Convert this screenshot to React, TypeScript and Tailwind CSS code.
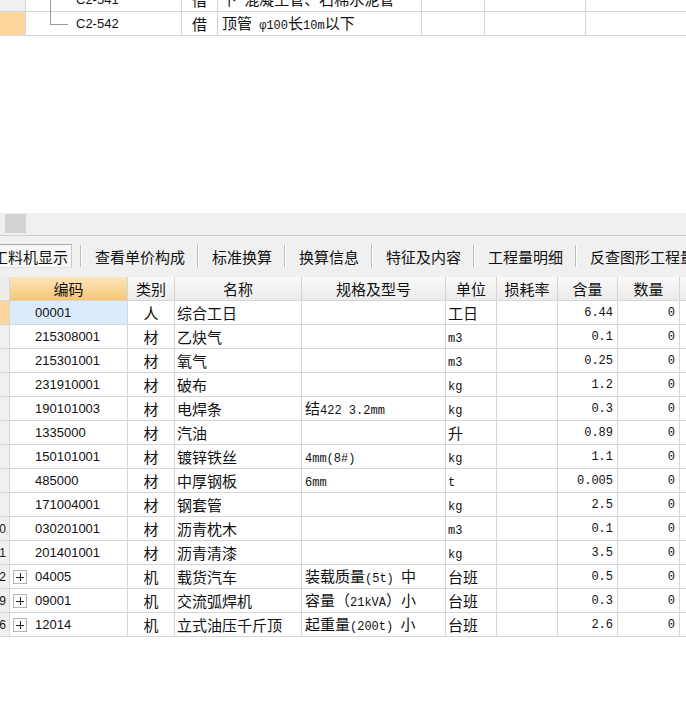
import React from "react";

const cjk = "font-['Noto_Sans_CJK_SC',sans-serif]";

type Row = {
  n?: string;
  code: string;
  cat: string;
  name: string;
  spec?: string;
  unit: string;
  amount: string;
  plus?: boolean;
  selected?: boolean;
};

const rows: Row[] = [
  { code: "00001", cat: "人", name: "综合工日", unit: "工日", amount: "6.44", selected: true },
  { code: "215308001", cat: "材", name: "乙炔气", unit: "m3", amount: "0.1" },
  { code: "215301001", cat: "材", name: "氧气", unit: "m3", amount: "0.25" },
  { code: "231910001", cat: "材", name: "破布", unit: "kg", amount: "1.2" },
  { code: "190101003", cat: "材", name: "电焊条", spec: "结422 3.2mm", unit: "kg", amount: "0.3" },
  { code: "1335000", cat: "材", name: "汽油", unit: "升", amount: "0.89" },
  { code: "150101001", cat: "材", name: "镀锌铁丝", spec: "4mm(8#)", unit: "kg", amount: "1.1" },
  { code: "485000", cat: "材", name: "中厚钢板", spec: "6mm", unit: "t", amount: "0.005" },
  { code: "171004001", cat: "材", name: "钢套管", unit: "kg", amount: "2.5" },
  { n: "10", code: "030201001", cat: "材", name: "沥青枕木", unit: "m3", amount: "0.1" },
  { n: "11", code: "201401001", cat: "材", name: "沥青清漆", unit: "kg", amount: "3.5" },
  { n: "12", code: "04005", cat: "机", name: "载货汽车", spec: "装载质量(5t) 中", unit: "台班", amount: "0.5", plus: true },
  { n: "39", code: "09001", cat: "机", name: "交流弧焊机", spec: "容量（21kVA）小", unit: "台班", amount: "0.3", plus: true },
  { n: "36", code: "12014", cat: "机", name: "立式油压千斤顶", spec: "起重量(200t) 小", unit: "台班", amount: "2.6", plus: true },
];

const tabs = ["查看单价构成", "标准换算", "换算信息", "特征及内容", "工程量明细", "反查图形工程量"];

// ascii runs are drawn in the narrow mono face, the rest in the CJK face
function Mixed({ text }: { text: string }) {
  const parts = text.split(/([\x20-\x7E\u03c6]+)/).filter(Boolean);
  return (
    <span className="whitespace-pre">
      {parts.map((p, i) =>
        /^[\x20-\x7E\u03c6]+$/.test(p) ? (
          <span key={i} className="font-['Liberation_Mono',monospace] text-[12px]">
            {p}
          </span>
        ) : (
          <span key={i}>{p}</span>
        )
      )}
    </span>
  );
}

function TreeLines({ last }: { last?: boolean }) {
  return (
    <svg width="50" height="24" className="shrink-0">
      <line x1="24.5" y1="0" x2="24.5" y2={last ? 12 : 24} stroke="#9a9a9a" />
      {last && <line x1="24" y1="12.5" x2="42" y2="12.5" stroke="#9a9a9a" />}
    </svg>
  );
}

function PlusBox() {
  return (
    <div className="w-[14px] h-[14px] ml-[3px] mr-[8px] border border-[#b4b4b4] bg-white flex items-center justify-center shrink-0">
      <svg width="10" height="10">
        <line x1="1" y1="5.5" x2="9" y2="5.5" stroke="#222" />
        <line x1="5.5" y1="1" x2="5.5" y2="9" stroke="#222" />
      </svg>
    </div>
  );
}

function TopRow({ code, name, last }: { code: string; name: string; last?: boolean }) {
  return (
    <div className="flex h-[24px] border-b border-[#d6d6d6]">
      <div className={`w-[26px] shrink-0 border-r border-[#d6d6d6] ${last ? "bg-[#fcd69c]" : "bg-[#f0f0f0]"}`} />
      <div className="w-[156px] shrink-0 border-r border-[#d6d6d6] flex items-center">
        <TreeLines last={last} />
        <span className="font-['Liberation_Sans',sans-serif] text-[13px] text-[#111]">{code}</span>
      </div>
      <div className="w-[36px] shrink-0 border-r border-[#d6d6d6] flex items-center justify-center">借</div>
      <div className="w-[204px] shrink-0 border-r border-[#d6d6d6] flex items-center pl-[4px] whitespace-nowrap overflow-hidden">
        <Mixed text={name} />
      </div>
      <div className="w-[63px] shrink-0 border-r border-[#d6d6d6]" />
      <div className="w-[101px] shrink-0 border-r border-[#d6d6d6]" />
      <div className="flex-1" />
    </div>
  );
}

export default function App() {
  return (
    <div className={`w-[686px] h-[704px] overflow-hidden bg-white text-[15px] text-[#111] leading-none ${cjk}`}>
      {/* upper grid, cut off at the top */}
      <div className="h-[36px] overflow-hidden">
        <div className="-mt-[12px]">
          <TopRow code="C2-541" name="下 混凝土管、石棉水泥管" />
          <TopRow code="C2-542" name="顶管 φ100长10m以下" last />
        </div>
      </div>

      <div className="h-[177px]" />

      {/* scroll strip */}
      <div className="h-[23px] bg-[#f0f0f0] border-b border-[#cfcfcf] pt-[1px]">
        <div className="ml-[5px] w-[21px] h-[19px] bg-[#d2d2d2]" />
      </div>

      {/* tabs */}
      <div className="h-[41px] bg-[#f0f0f0] flex items-start pt-[8px] whitespace-nowrap overflow-hidden">
        <div className="-ml-[10px] shrink-0 h-[24px] w-[82px] border border-[#a8a8a8] border-b-[#e4e4e4] border-r-[#c8c8c8] bg-[#f7f7f7] flex items-center pl-[2px]">
          工料机显示
        </div>
        <div className="w-[8px] shrink-0" />
        {tabs.map((t) => (
          <React.Fragment key={t}>
            <div className="mt-[1px] shrink-0 h-[22px] w-[2px] border-l border-[#bcbcbc] border-r border-r-white" />
            <div className="h-[24px] shrink-0 pl-[13px] pr-[12px] flex items-center">{t}</div>
          </React.Fragment>
        ))}
      </div>

      {/* header */}
      <div className="flex h-[24px] border-b border-[#d6d6d6]">
        <div className="w-[10px] shrink-0 border-r border-[#d6d6d6] bg-[#ececec]" />
        <div className="w-[118px] shrink-0 border-r border-[#d6d6d6] bg-linear-to-b from-[#fde5ba] to-[#f6c774] flex items-center justify-center">编码</div>
        <div className="w-[47px] shrink-0 border-r border-[#d6d6d6] bg-linear-to-b from-[#fafafa] to-[#ebebeb] flex items-center justify-center">类别</div>
        <div className="w-[127px] shrink-0 border-r border-[#d6d6d6] bg-linear-to-b from-[#fafafa] to-[#ebebeb] flex items-center justify-center">名称</div>
        <div className="w-[144px] shrink-0 border-r border-[#d6d6d6] bg-linear-to-b from-[#fafafa] to-[#ebebeb] flex items-center justify-center">规格及型号</div>
        <div className="w-[51px] shrink-0 border-r border-[#d6d6d6] bg-linear-to-b from-[#fafafa] to-[#ebebeb] flex items-center justify-center">单位</div>
        <div className="w-[61px] shrink-0 border-r border-[#d6d6d6] bg-linear-to-b from-[#fafafa] to-[#ebebeb] flex items-center justify-center">损耗率</div>
        <div className="w-[60px] shrink-0 border-r border-[#d6d6d6] bg-linear-to-b from-[#fafafa] to-[#ebebeb] flex items-center justify-center">含量</div>
        <div className="w-[62px] shrink-0 border-r border-[#d6d6d6] bg-linear-to-b from-[#fafafa] to-[#ebebeb] flex items-center justify-center">数量</div>
        <div className="flex-1 bg-linear-to-b from-[#fafafa] to-[#ebebeb]" />
      </div>

      {rows.map((r) => (
        <div key={r.code} className="flex h-[24px] border-b border-[#d6d6d6]">
          <div
            className={`w-[10px] shrink-0 border-r border-[#d6d6d6] overflow-hidden flex items-center justify-end pr-[3px] font-['Liberation_Sans',sans-serif] text-[12px] ${
              r.selected ? "bg-[#fcd69c]" : "bg-[#f0f0f0]"
            }`}
          >
            <span className="shrink-0">{r.n}</span>
          </div>
          <div
            className={`w-[118px] shrink-0 border-r border-[#d6d6d6] flex items-center font-['Liberation_Sans',sans-serif] text-[13px] ${
              r.selected ? "bg-[#dcebfb]" : ""
            } ${r.plus ? "" : "pl-[25px]"}`}
          >
            {r.plus && <PlusBox />}
            {r.code}
          </div>
          <div className="w-[47px] shrink-0 border-r border-[#d6d6d6] flex items-center justify-center">{r.cat}</div>
          <div className="w-[127px] shrink-0 border-r border-[#d6d6d6] flex items-center pl-[2px] whitespace-nowrap">{r.name}</div>
          <div className="w-[144px] shrink-0 border-r border-[#d6d6d6] flex items-center pl-[3px] whitespace-nowrap overflow-hidden">
            {r.spec && <Mixed text={r.spec} />}
          </div>
          <div className="w-[51px] shrink-0 border-r border-[#d6d6d6] flex items-center pl-[2px]">
            <Mixed text={r.unit} />
          </div>
          <div className="w-[61px] shrink-0 border-r border-[#d6d6d6]" />
          <div className="w-[60px] shrink-0 border-r border-[#d6d6d6] flex items-center justify-end pr-[4px] font-['Liberation_Mono',monospace] text-[12px]">
            {r.amount}
          </div>
          <div className="w-[62px] shrink-0 border-r border-[#d6d6d6] flex items-center justify-end pr-[4px] font-['Liberation_Mono',monospace] text-[12px]">
            0
          </div>
          <div className="flex-1" />
        </div>
      ))}
    </div>
  );
}
